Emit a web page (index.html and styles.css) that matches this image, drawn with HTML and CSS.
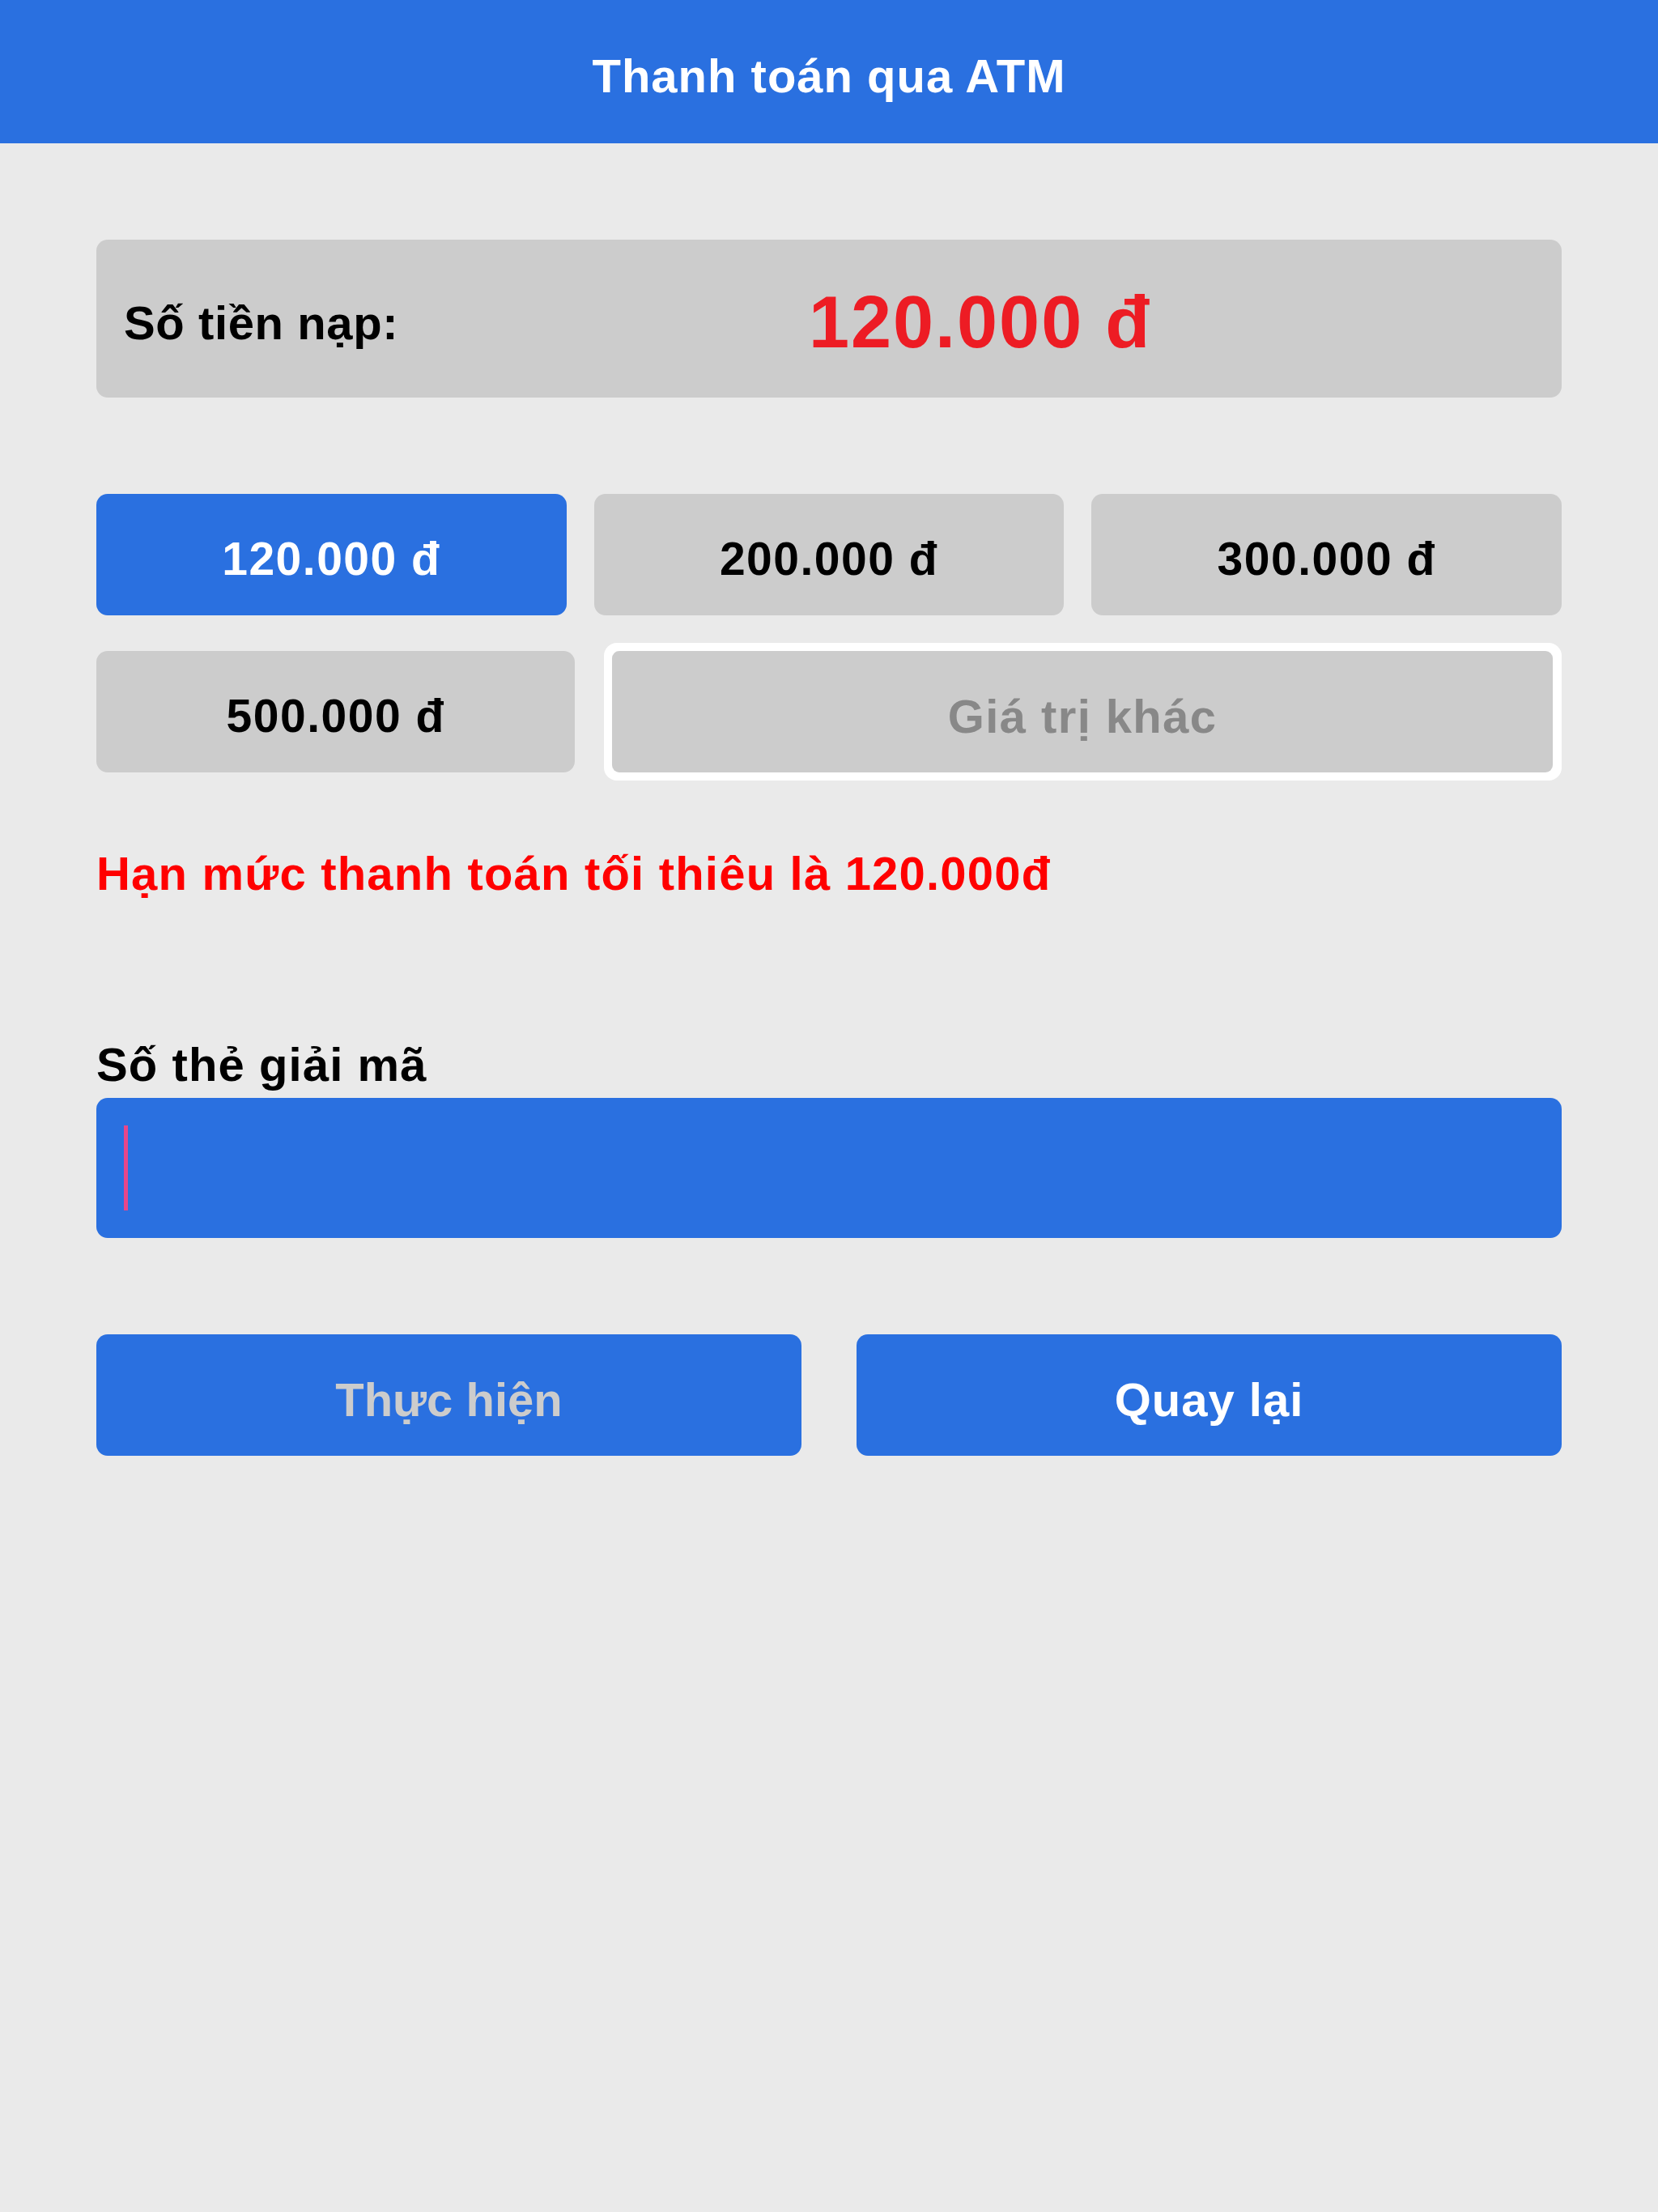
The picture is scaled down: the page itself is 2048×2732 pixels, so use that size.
FILE: index.html
```html
<!DOCTYPE html>
<html lang="vi">
<head>
<meta charset="utf-8">
<title>Thanh toán qua ATM</title>
<link rel="stylesheet" href="styles.css">
</head>
<body>
<header class="topbar">
  <h1 class="topbar-title">Thanh toán qua ATM</h1>
</header>
<main class="content">
  <section class="amount-box">
    <span class="amount-label">Số tiền nạp:</span>
    <span class="amount-value">120.000 đ</span>
  </section>

  <div class="preset-row">
    <button class="preset preset-active">120.000 đ</button>
    <button class="preset">200.000 đ</button>
    <button class="preset">300.000 đ</button>
  </div>
  <div class="preset-row preset-row-2">
    <button class="preset">500.000 đ</button>
    <div class="custom-frame">
      <div class="custom-input">Giá trị khác</div>
    </div>
  </div>

  <p class="limit-msg">Hạn mức thanh toán tối thiêu là 120.000đ</p>

  <label class="field-label">Số thẻ giải mã</label>
  <div class="card-input"><span class="caret"></span></div>

  <div class="actions">
    <button class="action action-disabled">Thực hiện</button>
    <button class="action">Quay lại</button>
  </div>
</main>
</body>
</html>
```

FILE: styles.css
```css
* {
  box-sizing: border-box;
}

body {
  margin: 0;
  background: #eaeaea;
  font-family: "Liberation Sans", Arial, sans-serif;
  font-weight: bold;
}

.topbar {
  height: 177px;
  background: #2a70e0;
  display: flex;
  align-items: center;
  justify-content: center;
  padding-top: 10px;
}

.topbar-title {
  margin: 0;
  color: #ffffff;
  font-size: 58px;
  font-weight: bold;
  letter-spacing: 1px;
}

.content {
  padding: 119px 119px 0;
}

.amount-box {
  height: 195px;
  background: #cccccc;
  border-radius: 14px;
  display: flex;
  align-items: center;
  padding: 10px 0 0 34px;
}

.amount-label {
  font-size: 58px;
  letter-spacing: 0.6px;
  color: #000000;
}

.amount-value {
  flex: 1;
  text-align: center;
  font-size: 90px;
  letter-spacing: 2px;
  color: #ed1c24;
}

/* preset amount grid */
.preset-row {
  display: grid;
  grid-template-columns: 1fr 1fr 1fr;
  gap: 34px;
  margin-top: 119px;
  height: 150px;
}

.preset-row-2 {
  grid-template-columns: 1fr 2fr;
  margin-top: 34px;
  height: 170px;
  gap: 36px;
  align-items: center;
}

.preset {
  height: 150px;
  border: none;
  border-radius: 14px;
  background: #cccccc;
  color: #000000;
  font-family: inherit;
  font-weight: bold;
  font-size: 57px;
  letter-spacing: 1.5px;
  padding: 10px 0 0;
}

.preset-active {
  background: #2a70e0;
  color: #ffffff;
}

.custom-frame {
  height: 170px;
  background: #ffffff;
  border-radius: 16px;
  padding: 10px 11px 10px 10px;
}

.custom-input {
  height: 100%;
  background: #cccccc;
  border-radius: 9px;
  display: flex;
  align-items: center;
  justify-content: center;
  padding-top: 10px;
  color: #888888;
  font-size: 58px;
  letter-spacing: 1.4px;
}

.limit-msg {
  margin: 81px 0 0;
  font-size: 58px;
  line-height: 68px;
  letter-spacing: 1.2px;
  color: #ff0000;
}

.field-label {
  display: block;
  margin-top: 168px;
  font-size: 58px;
  line-height: 68px;
  letter-spacing: 1.1px;
  color: #000000;
}

.card-input {
  margin-top: 7px;
  height: 173px;
  background: #2a70e0;
  border-radius: 14px;
  display: flex;
  align-items: center;
  padding-left: 34px;
}

.caret {
  width: 5px;
  height: 105px;
  background: #e8468a;
}

.actions {
  display: flex;
  gap: 68px;
  margin-top: 119px;
}

.action {
  flex: 1;
  height: 150px;
  border: none;
  border-radius: 14px;
  background: #2a70e0;
  color: #ffffff;
  font-family: inherit;
  font-weight: bold;
  font-size: 58px;
  letter-spacing: 1px;
  padding: 10px 0 0;
}

.action-disabled {
  color: #cccccc;
  letter-spacing: 0;
}
```
